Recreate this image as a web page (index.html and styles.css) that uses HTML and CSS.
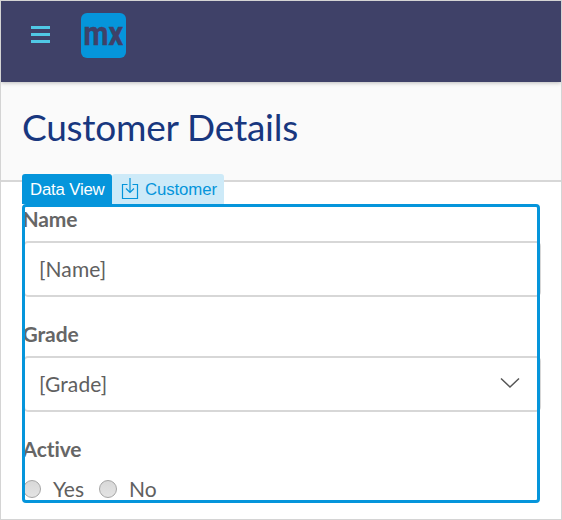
FILE: index.html
```html
<!DOCTYPE html>
<html lang="en">
<head>
<meta charset="utf-8">
<title>Customer Details</title>
<link rel="stylesheet" href="styles.css">
</head>
<body>
<div class="page">
  <header class="topbar">
    <div class="menu"><span></span><span></span><span></span></div>
    <svg class="logo" viewBox="0 0 45 45">
      <rect width="45" height="45" rx="6" fill="#0595db"/>
      <text x="2.5" y="31.8" textLength="39.5" lengthAdjust="spacingAndGlyphs">mx</text>
    </svg>
  </header>
  <div class="title-area"><h1>Customer Details</h1></div>
  <main class="dataview">
    <div class="tabs">
      <div class="tab tab-type">Data View</div>
      <div class="tab tab-entity">
        <svg class="entity-icon" viewBox="0 0 18 22"><path d="M6.5 6.5H1.5v14h15v-14h-5M9 0v14.5M5 10.5l4 4 4-4"/></svg>
        <span>Customer</span>
      </div>
    </div>
    <div class="form">
      <div class="field">
        <label>Name</label>
        <div class="control">[Name]</div>
      </div>
      <div class="field">
        <label>Grade</label>
        <div class="control"><span>[Grade]</span>
          <svg class="chevron" viewBox="0 0 20 12"><path d="M1 1.5l9 8.5 9-8.5"/></svg>
        </div>
      </div>
      <div class="field">
        <label>Active</label>
        <div class="radios">
          <i class="radio"></i><span class="yes">Yes</span>
          <i class="radio"></i><span class="no">No</span>
        </div>
      </div>
    </div>
  </main>
</div>
</body>
</html>
```
FILE: styles.css
```css
* { box-sizing: border-box; }
body { margin: 0; background: #fff; font-family: Lato, sans-serif; color: #606060; font-variant-ligatures: none; }
.page { width: 562px; height: 520px; border: 1px solid #d4d4d4; overflow: hidden; }
.topbar {
  position: relative; height: 81px; padding: 12px 0 0 30px;
  display: flex; align-items: flex-start; gap: 31px;
  background: #3f4168; box-shadow: 0 1px 4px rgba(0,0,0,.25);
}
.menu { display: flex; flex-direction: column; gap: 4px; width: 19px; padding-top: 13px; }
.menu span { height: 3px; background: #50c8e6; }
.logo { width: 45px; height: 45px; display: block; overflow: visible; }
.logo text { font: 700 33px Roboto, sans-serif; fill: #3f4168; stroke: #3f4168; stroke-width: .5; }
.title-area { height: 100px; padding: 22px 0 0 21px; background: #fafafa; border-bottom: 2px solid #d7d7d7; }
h1 { margin: 0; font-size: 37px; line-height: 45px; font-weight: 400; letter-spacing: -.25px; color: #18377f; white-space: nowrap; }
.dataview { position: relative; width: 518px; margin: -8px 0 0 21px; }
.tabs { display: flex; height: 30px; font: 16.8px/30px "Liberation Sans", sans-serif; white-space: nowrap; }
.tab { display: flex; align-items: center; border-radius: 3px 3px 0 0; }
.tab-type { width: 90px; padding: 1px 0 0 8px; background: #0595db; color: #fff; letter-spacing: -.18px; }
.tab-entity { width: 112px; padding: 0 0 0 9px; gap: 6px; background: #cdeaf8; color: #0595db; letter-spacing: -.1px; }
.tab-entity span { padding-top: 1px; }
.entity-icon { width: 18px; height: 22px; fill: none; stroke: #0595db; stroke-width: 1.2; }
.form { position: relative; height: 299px; }
.form::after { content: ""; position: absolute; inset: 0; border: 3px solid #0595db; border-radius: 4px; }
.field { height: 115px; }
label { display: block; height: 37px; padding: 2px 0 0 .5px; font-size: 21px; line-height: 26px; font-weight: 700; color: #666; letter-spacing: -.1px; }
.control {
  display: flex; align-items: center; justify-content: space-between;
  height: 56px; margin: 0 -1px 0 1px; padding: 0 19px 2px 14px;
  border: 2px solid #d7d7d7; border-radius: 5px; font-size: 21px; letter-spacing: .1px;
}
.chevron { width: 20px; height: 12px; fill: none; stroke: #555; stroke-width: 1.5; }
.radios { display: flex; align-items: center; height: 36px; font-size: 21px; }
.radios span { padding-bottom: 2px; }
.radio { width: 18px; height: 18px; margin-left: 1px; border: 1px solid #a5a5a5; border-radius: 50%; background: linear-gradient(#d8d8d8, #e4e4e4); }
.yes { width: 45px; margin-left: 12px; }
.no { margin-left: 12px; }
```
